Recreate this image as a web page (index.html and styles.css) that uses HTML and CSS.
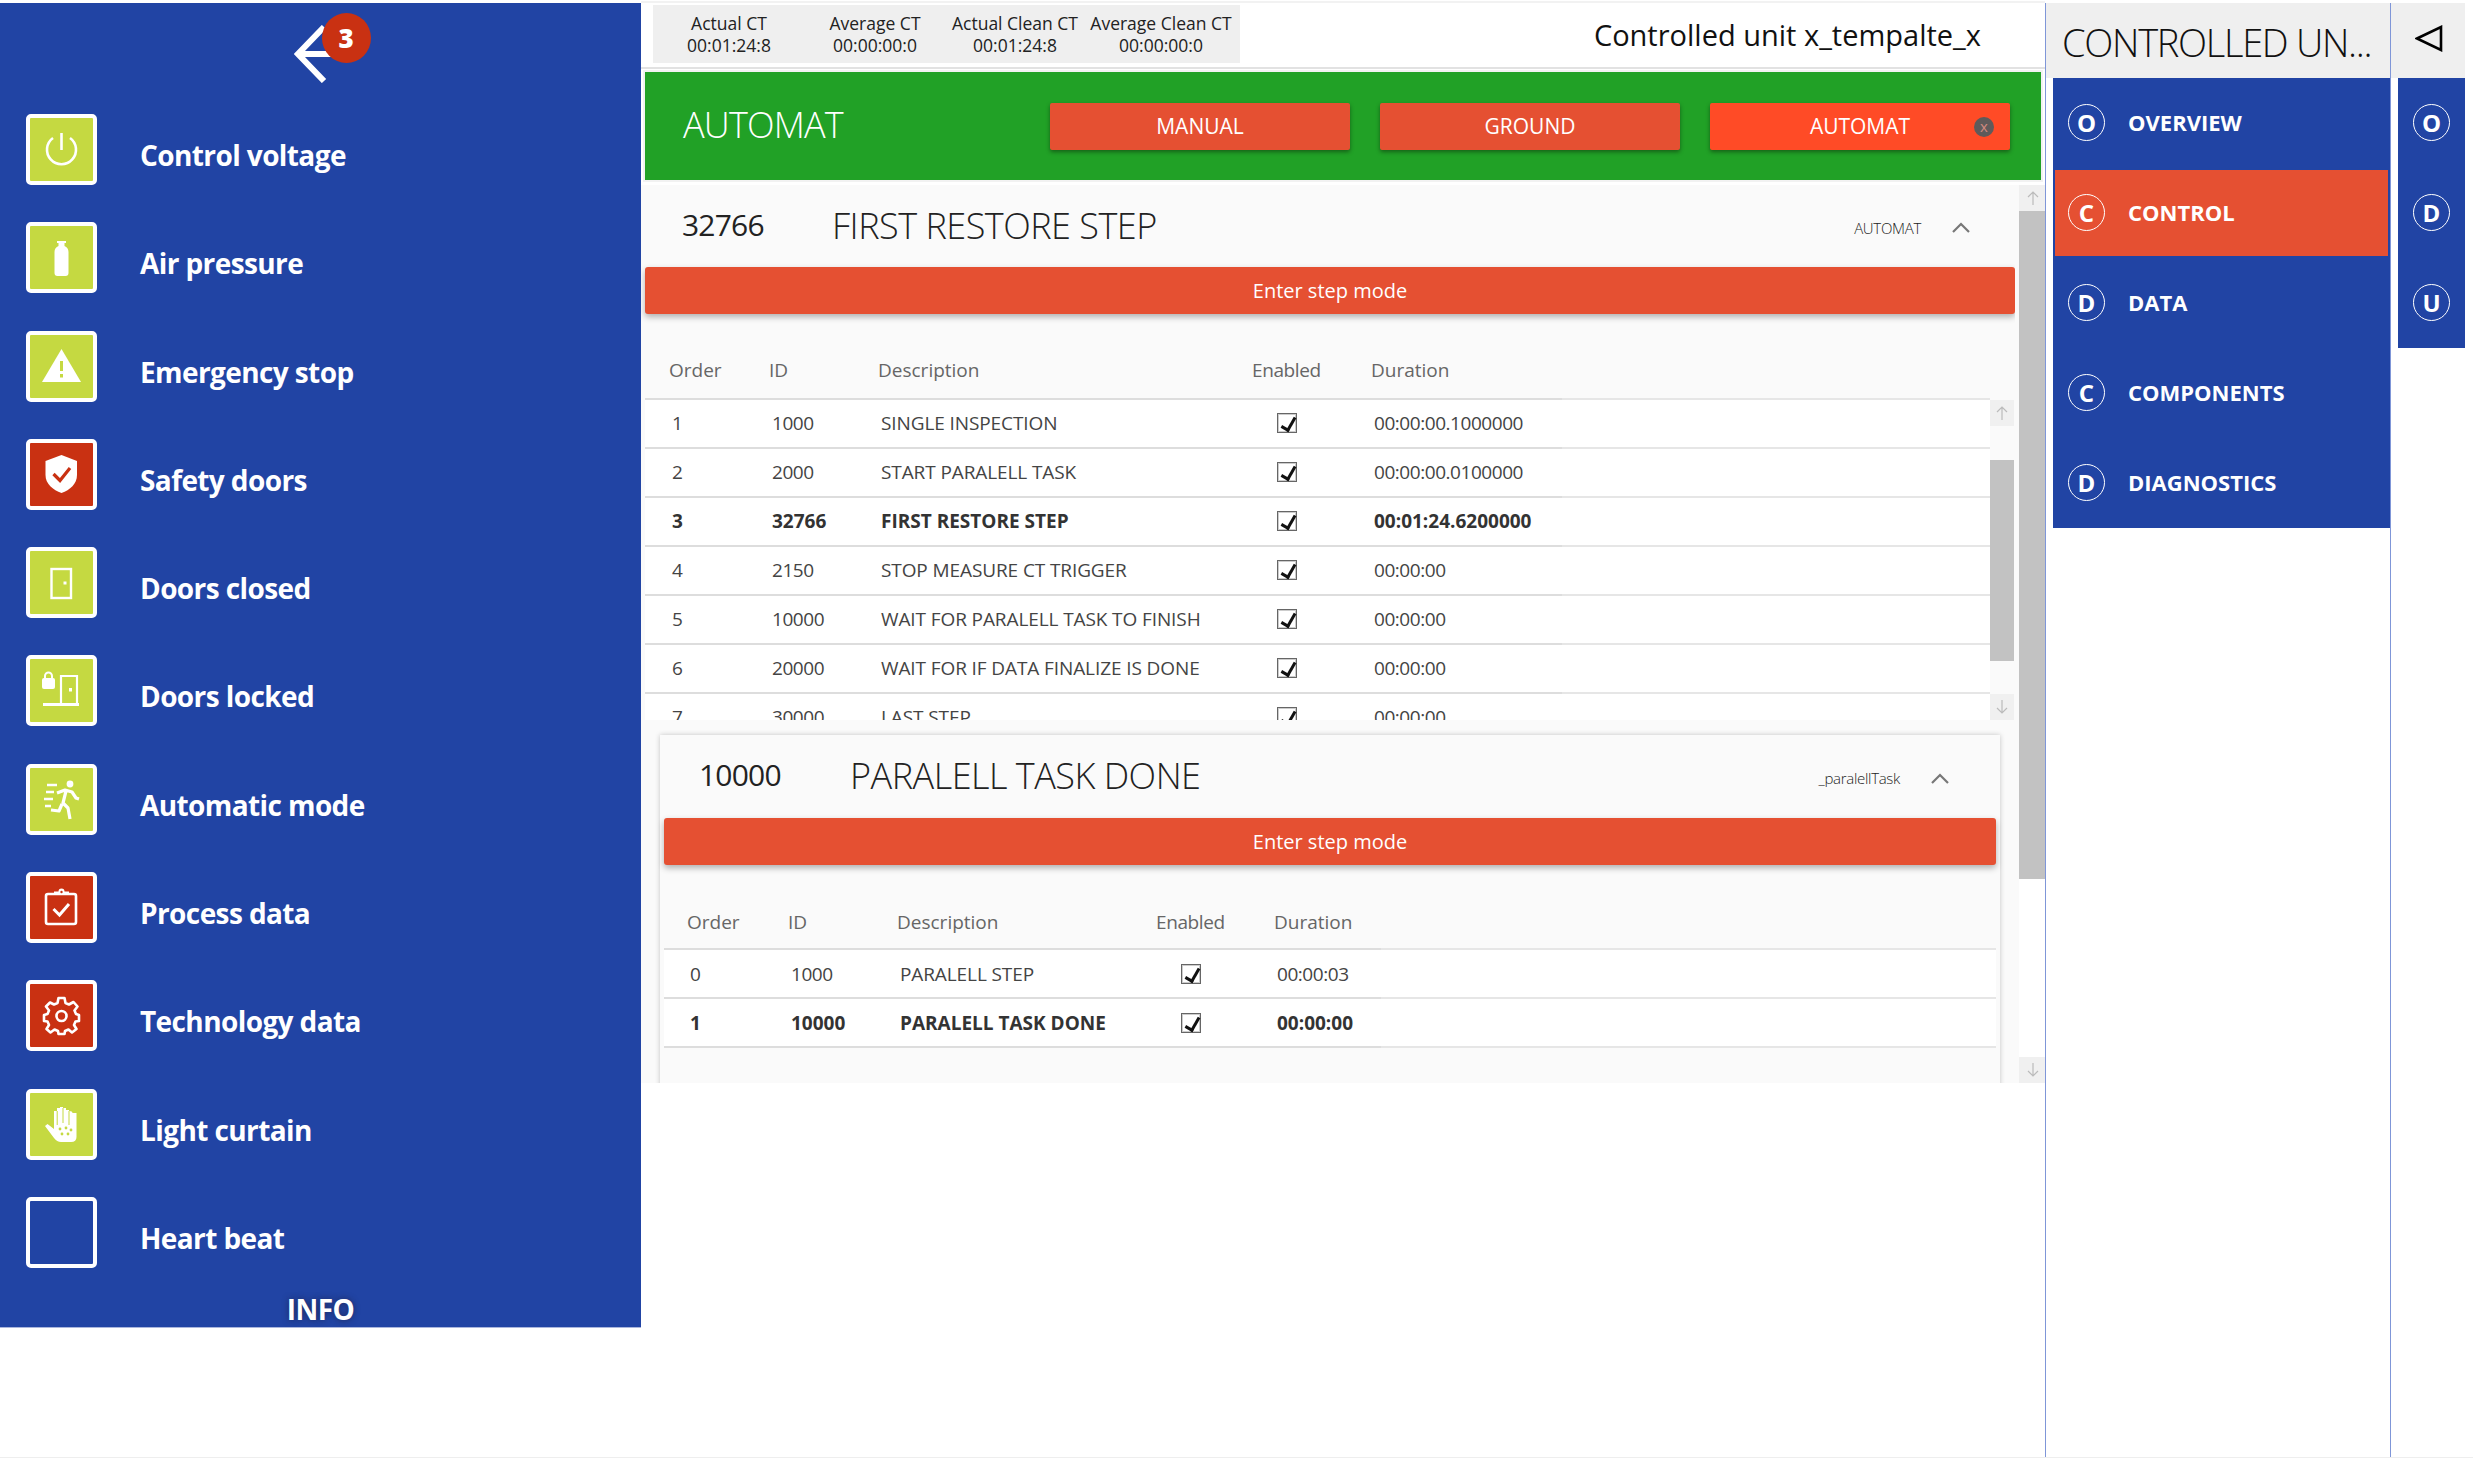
FILE: index.html
```html
<!DOCTYPE html>
<html lang="en">
<head>
    <meta charset="UTF-8">
    <meta name="viewport" content="width=device-width, initial-scale=1.0">
    <title>Controlled unit</title>
    <link rel="stylesheet" href="styles.css">
</head>
<body>
<div class="app">
    <!-- status list -->
    <aside class="status">
        <div class="status-top">
            <div class="back">
                <svg class="back-arrow" width="40" height="58" viewBox="0 0 40 58"><path d="M30 2 L4 29 L30 56 M4 29 H38" fill="none" stroke="#fff" stroke-width="6"/></svg>
                <span class="badge">3</span>
            </div>
        </div>
        <div class="status-row">
            <span class="tile ok"><svg viewBox="0 0 63 63"><path d="M23 20 A14.5 14.5 0 1 0 40 20" fill="none" stroke="#fff" stroke-width="2.6"/><path d="M31.5 15 V32" stroke="#fff" stroke-width="2.6"/></svg></span>
            <span class="status-label">Control voltage</span>
        </div>
        <div class="status-row">
            <span class="tile ok"><svg viewBox="0 0 63 63"><path d="M27 15 H36 V17 H34.5 V20 C37 21 38.5 23 38.5 26 V47 Q38.5 50 35.5 50 H27.5 Q24.5 50 24.5 47 V26 C24.5 23 26 21 28.5 20 V17 H27 Z" fill="#fff"/></svg></span>
            <span class="status-label">Air pressure</span>
        </div>
        <div class="status-row">
            <span class="tile ok"><svg viewBox="0 0 63 63"><path d="M31.5 14 L51 47 H12 Z" fill="#fff"/><path d="M30 26 H33 V36 H30 Z M30 39 H33 V42.5 H30 Z" fill="#c5d941"/></svg></span>
            <span class="status-label">Emergency stop</span>
        </div>
        <div class="status-row">
            <span class="tile alarm"><svg viewBox="0 0 63 63"><path d="M31.5 12 L47 18 V32 C47 41 40 47 31.5 50 C23 47 15.5 41 15.5 32 V18 Z" fill="#fff"/><path d="M23.5 31 L30 37.5 L40 25" fill="none" stroke="#c93112" stroke-width="3.2"/></svg></span>
            <span class="status-label">Safety doors</span>
        </div>
        <div class="status-row">
            <span class="tile ok"><svg viewBox="0 0 63 63"><rect x="21.5" y="18" width="19.5" height="29" fill="none" stroke="#fff" stroke-width="2.4"/><rect x="33.5" y="30.5" width="3" height="3" fill="#fff"/></svg></span>
            <span class="status-label">Doors closed</span>
        </div>
        <div class="status-row">
            <span class="tile ok"><svg viewBox="0 0 63 63"><rect x="12" y="19" width="13" height="11" rx="2" fill="#fff"/><path d="M15 20 V17 A3.5 3.5 0 0 1 22 17 V20" fill="none" stroke="#fff" stroke-width="2"/><path d="M31 44 V17 H47 V44" fill="none" stroke="#fff" stroke-width="2.2"/><rect x="13" y="44" width="36" height="3" fill="#fff"/><rect x="39" y="29" width="3" height="3.5" fill="#fff"/></svg></span>
            <span class="status-label">Doors locked</span>
        </div>
        <div class="status-row">
            <span class="tile ok"><svg viewBox="0 0 63 63"><circle cx="40" cy="16" r="3.4" fill="#fff"/><path d="M27 25 L35 22 L42 24 L46 30 L49 31 M36 23 L33 35 L38 40 L40 51 M32 36 L29 43 L21 42" fill="none" stroke="#fff" stroke-width="3.2" stroke-linejoin="round"/><path d="M17 17 H27 M16 24 H24 M14 31 H23 M15 38 H21" stroke="#fff" stroke-width="2.4"/></svg></span>
            <span class="status-label">Automatic mode</span>
        </div>
        <div class="status-row">
            <span class="tile alarm"><svg viewBox="0 0 63 63"><rect x="16" y="18" width="30" height="30" rx="2" fill="none" stroke="#fff" stroke-width="2.6"/><path d="M24 19 V15.5 H28.5 A3 3 0 0 1 34.5 15.5 H39 V19 Z" fill="#fff"/><circle cx="31.5" cy="16" r="1.2" fill="#c93112"/><path d="M23.5 33 L29.5 39 L39 28" fill="none" stroke="#fff" stroke-width="3"/></svg></span>
            <span class="status-label">Process data</span>
        </div>
        <div class="status-row">
            <span class="tile alarm"><svg viewBox="0 0 63 63"><path d="M28.5 14 H34.5 L35.5 19 L39 20.5 L43.5 18 L47.5 22.5 L44.5 26.5 L46 30 L49 31 V37 L45.5 37.5 L44 41 L46.5 45 L42 48.5 L38.5 45.5 L35 47 L34.5 50 H28.5 L28 47 L24.5 45.5 L20.5 48.5 L16.5 45 L19 41 L17.5 37.5 L14 37 V31 L17.5 30 L19 26.5 L16 22.5 L20 18.5 L24 20.5 L27.5 19 Z" fill="none" stroke="#fff" stroke-width="2.6" stroke-linejoin="round"/><circle cx="31.5" cy="32" r="5" fill="none" stroke="#fff" stroke-width="2.6"/></svg></span>
            <span class="status-label">Technology data</span>
        </div>
        <div class="status-row">
            <span class="tile ok"><svg viewBox="0 0 63 63"><path d="M15 33 L17.5 31 L24 36 V18 H27 V15 H30 V14 H33 V15 H36 V17 H39 V18 Q42.5 18 42.5 20 H46.5 V44 Q46.5 49 41 49 H31 Q27 49 24 45 Z" fill="#fff"/><path d="M27.2 18 V32 M33 15 V30 M39 18 V32" stroke="#c5d941" stroke-width="1"/><circle cx="30" cy="36" r="1.4" fill="#c5d941"/><circle cx="36" cy="35" r="1.4" fill="#c5d941"/><circle cx="41" cy="37" r="1.4" fill="#c5d941"/><circle cx="32" cy="41" r="1.4" fill="#c5d941"/><circle cx="38" cy="41" r="1.4" fill="#c5d941"/></svg></span>
            <span class="status-label">Light curtain</span>
        </div>
        <div class="status-row">
            <span class="tile"></span>
            <span class="status-label">Heart beat</span>
        </div>
        <div class="status-info">INFO</div>
    </aside>

    <main class="main">
        <header class="topbar">
            <div class="times">
                <div class="time"><span>Actual CT</span><span>00:01:24:8</span></div>
                <div class="time"><span>Average CT</span><span>00:00:00:0</span></div>
                <div class="time"><span>Actual Clean CT</span><span>00:01:24:8</span></div>
                <div class="time"><span>Average Clean CT</span><span>00:00:00:0</span></div>
            </div>
            <div class="unit-name">Controlled unit x_tempalte_x</div>
        </header>

        <section class="modebar">
            <div class="mode-name">AUTOMAT</div>
            <div class="mode-buttons">
                <button class="mode-btn">MANUAL</button>
                <button class="mode-btn">GROUND</button>
                <button class="mode-btn active">AUTOMAT<span class="close">x</span></button>
            </div>
        </section>

        <section class="steps">
            <div class="steps-content">
                <div class="step-head">
                    <span class="step-id">32766</span>
                    <span class="step-title">FIRST RESTORE STEP</span>
                    <span class="step-owner">AUTOMAT</span>
                    <svg class="chevron" width="20" height="12" viewBox="0 0 20 12"><path d="M2 10 L10 2 L18 10" fill="none" stroke="#777" stroke-width="2.2"/></svg>
                </div>
                <button class="step-btn">Enter step mode</button>

                <div class="table-area first">
                    <div class="table-clip">
                        <table class="step-table">
                            <colgroup><col class="c1"><col class="c2"><col class="c3"><col class="c4"><col class="c5"><col></colgroup>
                            <thead><tr><th>Order</th><th>ID</th><th>Description</th><th>Enabled</th><th>Duration</th><th></th></tr></thead>
                            <tbody>
                                <tr><td>1</td><td>1000</td><td>SINGLE INSPECTION</td><td><span class="check"></span></td><td>00:00:00.1000000</td><td></td></tr>
                                <tr><td>2</td><td>2000</td><td>START PARALELL TASK</td><td><span class="check"></span></td><td>00:00:00.0100000</td><td></td></tr>
                                <tr class="current"><td>3</td><td>32766</td><td>FIRST RESTORE STEP</td><td><span class="check"></span></td><td>00:01:24.6200000</td><td></td></tr>
                                <tr><td>4</td><td>2150</td><td>STOP MEASURE CT TRIGGER</td><td><span class="check"></span></td><td>00:00:00</td><td></td></tr>
                                <tr><td>5</td><td>10000</td><td>WAIT FOR PARALELL TASK TO FINISH</td><td><span class="check"></span></td><td>00:00:00</td><td></td></tr>
                                <tr><td>6</td><td>20000</td><td>WAIT FOR IF DATA FINALIZE IS DONE</td><td><span class="check"></span></td><td>00:00:00</td><td></td></tr>
                                <tr><td>7</td><td>30000</td><td>LAST STEP</td><td><span class="check"></span></td><td>00:00:00</td><td></td></tr>
                            </tbody>
                        </table>
                    </div>
                    <div class="inner-scroll">
                        <div class="scroll-btn"><svg width="12" height="14" viewBox="0 0 12 14"><path d="M6 14 V1 M1 6 L6 1 L11 6" fill="none" stroke="#bbb" stroke-width="1.2"/></svg></div>
                        <div class="inner-gap-a"></div>
                        <div class="inner-thumb"></div>
                        <div class="inner-gap-b"></div>
                        <div class="scroll-btn"><svg width="12" height="14" viewBox="0 0 12 14"><path d="M6 0 V13 M1 8 L6 13 L11 8" fill="none" stroke="#bbb" stroke-width="1.2"/></svg></div>
                    </div>
                </div>

                <div class="subcard">
                    <div class="step-head sub">
                        <span class="step-id">10000</span>
                        <span class="step-title">PARALELL TASK DONE</span>
                        <span class="step-owner">_paralellTask</span>
                        <svg class="chevron" width="20" height="12" viewBox="0 0 20 12"><path d="M2 10 L10 2 L18 10" fill="none" stroke="#777" stroke-width="2.2"/></svg>
                    </div>
                    <button class="step-btn">Enter step mode</button>
                    <table class="step-table sub">
                        <colgroup><col class="c1"><col class="c2"><col class="c3"><col class="c4"><col class="c5"><col></colgroup>
                        <thead><tr><th>Order</th><th>ID</th><th>Description</th><th>Enabled</th><th>Duration</th><th></th></tr></thead>
                        <tbody>
                            <tr><td>0</td><td>1000</td><td>PARALELL STEP</td><td><span class="check"></span></td><td>00:00:03</td><td></td></tr>
                            <tr class="current"><td>1</td><td>10000</td><td>PARALELL TASK DONE</td><td><span class="check"></span></td><td>00:00:00</td><td></td></tr>
                        </tbody>
                    </table>
                </div>
            </div>
            <div class="outer-scroll">
                <div class="scroll-btn"><svg width="12" height="14" viewBox="0 0 12 14"><path d="M6 14 V1 M1 6 L6 1 L11 6" fill="none" stroke="#bbb" stroke-width="1.2"/></svg></div>
                <div class="outer-thumb"></div>
                <div class="outer-rest"></div>
                <div class="scroll-btn"><svg width="12" height="14" viewBox="0 0 12 14"><path d="M6 0 V13 M1 8 L6 13 L11 8" fill="none" stroke="#bbb" stroke-width="1.2"/></svg></div>
            </div>
        </section>
    </main>

    <!-- right navigation -->
    <nav class="nav">
        <div class="nav-title">CONTROLLED UN...</div>
        <div class="nav-list">
            <a class="nav-item"><span class="ring">O</span>OVERVIEW</a>
            <a class="nav-item active"><span class="ring">C</span>CONTROL</a>
            <a class="nav-item"><span class="ring">D</span>DATA</a>
            <a class="nav-item"><span class="ring">C</span>COMPONENTS</a>
            <a class="nav-item"><span class="ring">D</span>DIAGNOSTICS</a>
        </div>
    </nav>

    <nav class="rail">
        <div class="rail-top"><svg width="28" height="27" viewBox="0 0 28 27"><path d="M2 13.5 L26 2 V25 Z" fill="none" stroke="#000" stroke-width="2.6"/></svg></div>
        <div class="rail-list">
            <a class="nav-item"><span class="ring">O</span></a>
            <a class="nav-item"><span class="ring">D</span></a>
            <a class="nav-item"><span class="ring">U</span></a>
        </div>
    </nav>
</div>
</body>
</html>
```

FILE: styles.css
```css
* {
    margin: 0;
    padding: 0;
    box-sizing: border-box;
}

body {
    background: white;
    font-family: 'Open Sans', 'Noto Sans', sans-serif;
    color: #333;
}

.app {
    display: flex;
    width: 2473px;
    height: 1458px;
    padding-top: 3px;
    border-bottom: 1px solid #eee;
}

/* status list */
.status {
    width: 641px;
    height: 1325px;
    flex: none;
    background: #2144a4;
    color: white;
    border-bottom: 1px solid #aab6dc;
}

.status-top {
    height: 111px;
    display: flex;
    justify-content: center;
}

.back {
    position: relative;
    width: 78px;
    height: 80px;
    left: 12px;
}

.back-arrow {
    position: absolute;
    left: 0;
    top: 22px;
}

.badge {
    position: absolute;
    left: 28px;
    top: 10px;
    width: 49px;
    height: 50px;
    border-radius: 50%;
    background: #c93112;
    color: white;
    font-size: 26px;
    font-weight: 800;
    display: flex;
    align-items: center;
    justify-content: center;
}

.status-row {
    display: flex;
    align-items: center;
    height: 71px;
    margin: 0 0 37.3px 26px;
}

.tile {
    width: 71px;
    height: 71px;
    flex: none;
    border: 4px solid white;
    border-radius: 5px;
}

.tile svg {
    display: block;
    width: 63px;
    height: 63px;
}

.tile.ok {
    background: #c5d941;
}

.tile.alarm {
    background: #c93112;
}

.status-label {
    margin: 11px 0 0 43px;
    font-size: 28px;
    font-weight: 700;
    letter-spacing: -0.6px;
}

.status-info {
    margin-top: -15px;
    text-align: center;
    font-size: 28px;
    font-weight: 700;
    letter-spacing: -0.5px;
    text-shadow: 0 0 6px rgba(30, 30, 60, 0.7);
}

/* middle */
.main {
    width: 1405px;
    flex: none;
    border-right: 1px solid #7f96d8;
    display: flex;
    flex-direction: column;
}

.topbar {
    display: flex;
    align-items: center;
    height: 66px;
    border-bottom: 2px solid #e2e2e2;
    padding: 0 64px 2px 12px;
    box-shadow: 0 -2px 0 #f2f2f2;
}

.times {
    display: flex;
    height: 58px;
    width: 587px;
    background: #efefef;
    padding-top: 7px;
}

.time {
    width: 140px;
    display: flex;
    flex-direction: column;
    align-items: center;
    font-size: 17.5px;
    line-height: 22px;
    color: #222;
    white-space: nowrap;
}

.time:first-child,
.time:last-child {
    width: 152px;
}

.unit-name {
    margin-left: auto;
    font-size: 29px;
    font-weight: 500;
    color: #111;
}

.modebar {
    display: flex;
    align-items: center;
    justify-content: space-between;
    height: 108px;
    margin: 3px 4px 0 4px;
    background: #21a126;
    box-shadow: 0 0 0 2px #f2f2f2;
    padding: 0 31px 0 38px;
}

.mode-name {
    margin-bottom: 4px;
    font-size: 36px;
    font-weight: 300;
    letter-spacing: -0.8px;
    color: white;
}

.mode-buttons {
    display: flex;
    gap: 30px;
}

.mode-btn {
    position: relative;
    width: 300px;
    height: 47px;
    border: none;
    border-radius: 2px;
    background: #e55032;
    color: white;
    font-family: inherit;
    font-size: 21px;
    font-weight: 500;
    box-shadow: 0 2px 4px rgba(0, 0, 0, 0.4);
}

.mode-btn.active {
    background: #ff4b26;
}

.close {
    position: absolute;
    right: 16px;
    top: 14px;
    width: 20px;
    height: 20px;
    border-radius: 50%;
    background: #5f5a5a;
    color: #d08a80;
    font-size: 15px;
    line-height: 18px;
}

/* steps panel */
.steps {
    display: flex;
    height: 898px;
    margin-top: 5px;
    overflow: hidden;
    background: #fafafa;
}

.steps-content {
    width: 1374px;
    padding-left: 4px;
    flex: none;
    overflow: hidden;
}

.step-head {
    display: flex;
    align-items: center;
    height: 82px;
    padding-left: 37px;
    padding-right: 44px;
}

.step-id {
    width: 150px;
    margin-bottom: 4px;
    font-size: 30px;
    font-weight: 500;
    letter-spacing: -0.8px;
    color: #222;
}

.step-title {
    margin-bottom: 2px;
    font-size: 36px;
    font-weight: 300;
    letter-spacing: -0.5px;
    color: #222;
}

.step-owner {
    margin-left: auto;
    margin-top: 3px;
    font-size: 15px;
    font-weight: 300;
    letter-spacing: -0.3px;
    color: #222;
}

.chevron {
    margin: 4px 0 0 30px;
}

.step-btn {
    display: block;
    width: 1370px;
    height: 47px;
    border: none;
    border-radius: 3px;
    background: #e55032;
    color: white;
    font-family: inherit;
    font-size: 20px;
    font-weight: 500;
    box-shadow: 0 3px 6px rgba(0, 0, 0, 0.3);
}

.table-area {
    display: flex;
    height: 406px;
}

.table-clip {
    width: 1345px;
    flex: none;
    overflow: hidden;
}

.inner-scroll {
    width: 24px;
    margin-top: 86px;
    display: flex;
    flex-direction: column;
    background: #fafafa;
}

.scroll-btn {
    height: 26px;
    flex: none;
    display: flex;
    align-items: center;
    justify-content: center;
    background: #f0f0f0;
}

.inner-gap-a {
    height: 34px;
}

.inner-thumb {
    height: 201px;
    background: #c2c2c2;
}

.inner-gap-b {
    height: 33px;
}

.step-table {
    width: 100%;
    border-collapse: separate;
    border-spacing: 0;
    table-layout: fixed;
    font-size: 19px;
}

.step-table .c1 { width: 124px; }
.step-table .c2 { width: 109px; }
.step-table .c3 { width: 374px; }
.step-table .c4 { width: 119px; }
.step-table .c5 { width: 191px; }
.step-table.sub .c1 { width: 124px; }
.step-table.sub .c2 { width: 109px; }
.step-table.sub .c3 { width: 259px; }
.step-table.sub .c4 { width: 118px; }
.step-table.sub .c5 { width: 107px; }

.step-table th {
    height: 86px;
    padding-top: 28px;
    text-align: left;
    font-weight: 400;
    color: #666;
    border-bottom: 2px solid #ddd;
}

.step-table th:nth-child(4) {
    letter-spacing: -0.4px;
}

.step-table th:first-child {
    padding-left: 24px;
}

.step-table td {
    height: 49px;
    padding-left: 3px;
    padding-bottom: 2px;
    background: white;
    border-bottom: 2px solid #ddd;
    color: #444;
    letter-spacing: -0.1px;
    white-space: nowrap;
}

.step-table td:nth-child(2),
.step-table td:nth-child(5) {
    letter-spacing: -0.45px;
}

.step-table td:first-child {
    padding-left: 27px;
}

.step-table th:last-child,
.step-table td:last-child {
    border-bottom-color: #e6e6e6;
}

.step-table tr.current td {
    font-weight: 700;
    color: #333;
    letter-spacing: 0;
}

.check {
    display: block;
    position: relative;
    width: 20px;
    height: 20px;
    margin: 0 0 0 22px;
    border: 1px solid #666;
    box-shadow: inset 0 0 0 1px #ccc;
    background: white;
}

.check::after {
    content: "";
    position: absolute;
    left: 6px;
    top: 1px;
    width: 6px;
    height: 13px;
    border-right: 3px solid #111;
    border-bottom: 3px solid #111;
    transform: rotate(30deg);
}

.subcard {
    width: 1340px;
    margin: 15px 0 0 15px;
    height: 360px;
    padding: 0 4px;
    background: #fafafa;
    box-shadow: 0 0 5px rgba(0, 0, 0, 0.22);
}

.step-head.sub {
    height: 83px;
    padding-left: 35px;
    padding-right: 46px;
}

.step-head.sub .step-id {
    width: 151px;
}

.subcard .step-btn {
    width: 1332px;
}

.step-table.sub th {
    height: 85px;
    padding-top: 30px;
}

.step-table.sub td {
    padding-bottom: 0;
}

.step-table.sub th:first-child {
    padding-left: 23px;
}

.step-table.sub td:first-child {
    padding-left: 26px;
}

.outer-scroll {
    width: 27px;
    margin-left: 4px;
    flex: none;
    display: flex;
    flex-direction: column;
}

.outer-thumb {
    flex: none;
    height: 668px;
    background: #c2c2c2;
}

.outer-rest {
    flex: 1;
    background: white;
}

/* navigation */
.nav {
    width: 345px;
    flex: none;
    border-right: 1px solid #7f96d8;
}

.nav-title {
    height: 75px;
    background: #efefef;
    padding-left: 16px;
    font-size: 38px;
    font-weight: 300;
    letter-spacing: -1.3px;
    line-height: 78px;
    color: #111;
    white-space: nowrap;
}

.nav-list {
    margin-left: 7px;
    height: 450px;
    background: #2144a4;
}

.nav-item {
    display: flex;
    align-items: center;
    height: 90px;
    padding: 0 0 2px 15px;
    font-size: 22px;
    font-weight: 700;
    color: white;
}

.nav-item.active {
    margin: 2px;
    padding-left: 13px;
    height: 86px;
    background: #e55032;
}

.ring {
    width: 37px;
    height: 37px;
    flex: none;
    margin: 1px 23px 0 0;
    border: 1.5px solid white;
    border-radius: 50%;
    display: flex;
    align-items: center;
    justify-content: center;
    font-size: 24px;
}

.rail {
    width: 74px;
    flex: none;
}

.rail-top {
    height: 75px;
    background: #efefef;
    display: flex;
    padding: 22px 0 0 24px;
}

.rail-list {
    margin-left: 7px;
    height: 270px;
    background: #2144a4;
}
```
